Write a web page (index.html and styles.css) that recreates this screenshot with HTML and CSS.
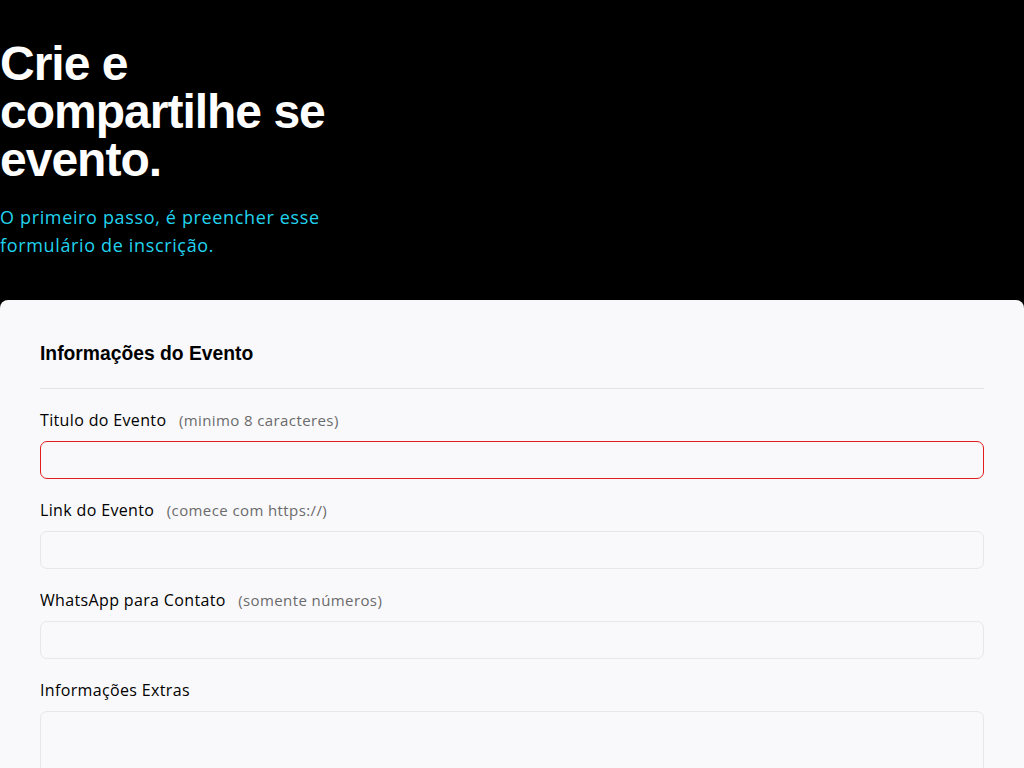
FILE: index.html
```html
<!DOCTYPE html>
<html lang="pt-BR">
<head>
<meta charset="utf-8">
<title>Crie seu evento</title>
<link rel="stylesheet" href="styles.css">
</head>
<body>
<header class="hero">
  <h1 class="hero-title">Crie e<br>compartilhe se<br>evento.</h1>
  <p class="hero-sub">O primeiro passo, é preencher esse<br>formulário de inscrição.</p>
</header>
<main class="card">
  <h2 class="card-title">Informações do Evento</h2>
  <form class="form">
    <div class="field">
      <label class="label">Titulo do Evento <span class="hint">(minimo 8 caracteres)</span></label>
      <input class="input input-error" type="text">
    </div>
    <div class="field">
      <label class="label">Link do Evento <span class="hint">(comece com https://)</span></label>
      <input class="input" type="text">
    </div>
    <div class="field">
      <label class="label">WhatsApp para Contato <span class="hint">(somente números)</span></label>
      <input class="input" type="text">
    </div>
    <div class="field">
      <label class="label">Informações Extras</label>
      <textarea class="input textarea"></textarea>
    </div>
  </form>
</main>
</body>
</html>
```
FILE: styles.css
```css
* { box-sizing: border-box; }
html, body { margin: 0; padding: 0; }
body {
  background: #000;
  font-family: "Open Sans", "Liberation Sans", sans-serif;
}
.hero {
  padding: 40px 0 41px 0;
}
.hero-title {
  margin: 0;
  color: #fff;
  font-family: "Liberation Sans", Arial, sans-serif;
  font-weight: 700;
  font-size: 48px;
  line-height: 48px;
  letter-spacing: -1px;
}
.hero-sub {
  margin: 19px 0 0 0;
  color: #22d3ee;
  font-size: 18px;
  line-height: 28px;
  letter-spacing: 0.65px;
}
.card {
  background: #f9f9fb;
  border-radius: 8px 8px 0 0;
  padding: 40px 40px 40px;
  min-height: 500px;
}
.card-title {
  margin: 0;
  font-family: "Liberation Sans", Arial, sans-serif;
  font-weight: 700;
  font-size: 19.3px;
  line-height: 28px;
  color: #000;
  padding-bottom: 20px;
  border-bottom: 1px solid #e4e4e7;
}
.form {
  display: flex;
  flex-direction: column;
}
.field {
  display: flex;
  flex-direction: column;
  gap: 9px;
  margin-top: 19px;
}
.label {
  font-size: 16px;
  line-height: 24px;
  color: #000;
  letter-spacing: 0.35px;
}
.hint {
  margin-left: 8px;
  font-size: 15px;
  letter-spacing: 0.4px;
  color: #6b6b6b;
}
.input {
  display: block;
  width: 100%;
  height: 38px;
  background: #f9f9fb;
  border: 1px solid #e7e7ea;
  border-radius: 7px;
  font: inherit;
}
.input-error {
  border-color: #e11d1d;
}
.textarea {
  height: 120px;
  resize: none;
}
```
